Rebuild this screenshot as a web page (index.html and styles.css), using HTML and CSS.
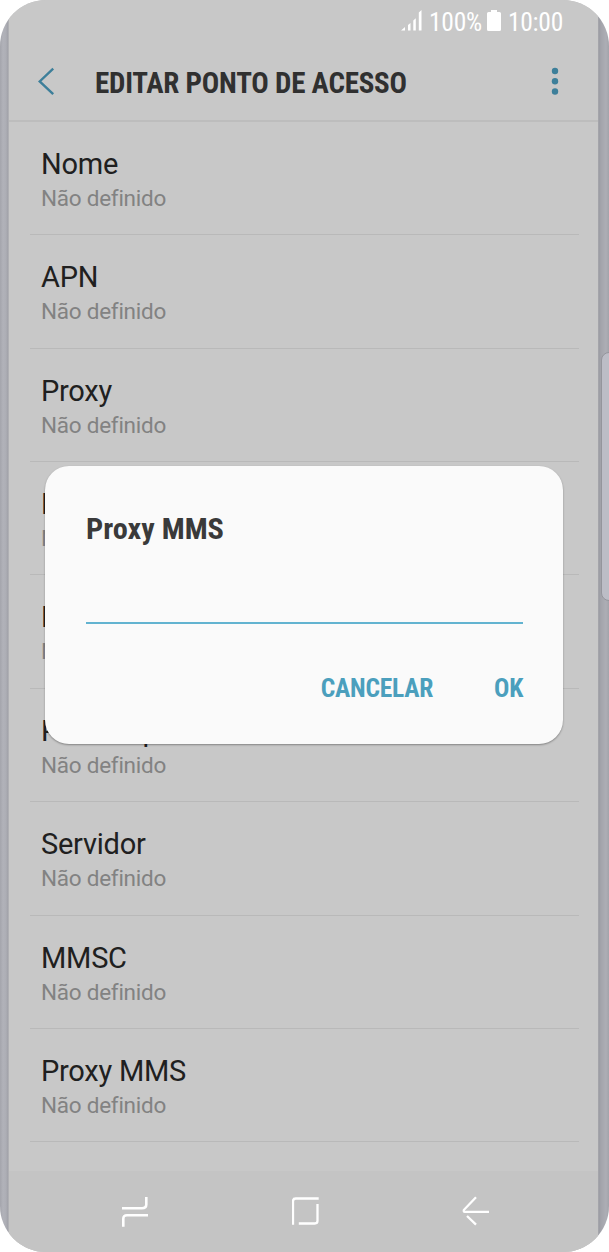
FILE: index.html
```html
<!DOCTYPE html>
<html lang="pt">
<head>
<meta charset="utf-8">
<title>Editar ponto de acesso</title>
<link rel="stylesheet" href="styles.css">
</head>
<body>
<div class="phone">
  <div class="side-panel"></div>
  <div class="screen">
    <div class="status">
      <svg class="signal" width="22" height="21" viewBox="0 0 22 21" fill="#fff"><path d="M0 20.500 4 17v3.500zM7 15l2.500-2v7.500H7zM12.300 10.500l2.500-2.200v12.200h-2.500zM17.800 2.500 20.500 0v20.500h-2.700z"/></svg>
      <span class="status-text battery-level">100%</span>
      <svg class="battery" width="14" height="21" viewBox="0 0 14 21" fill="#fff"><path d="M4 0h6v2h2.500Q14 2 14 3.500v16q0 1.500-1.500 1.500h-11Q0 21 0 19.500v-16Q0 2 1.500 2H4z"/></svg>
      <span class="status-text clock">10:00</span>
    </div>
    <header class="header">
      <svg class="back" width="18" height="28" viewBox="0 0 18 28" fill="none" stroke="#3d7f9a" stroke-width="2.400"><path d="M15.200 1.700 1.700 14.500l13.500 12.600"/></svg>
      <h1 class="title">EDITAR PONTO DE ACESSO</h1>
      <svg class="more" width="8" height="28" viewBox="0 0 8 28" fill="#3d7f9a"><circle cx="4" cy="4" r="3.200"/><circle cx="4" cy="14.200" r="3.200"/><circle cx="4" cy="24.500" r="3.200"/></svg>
    </header>
    <main class="list">
      <div class="row"><div class="name">Nome</div><div class="value">Não definido</div></div>
      <div class="row"><div class="name">APN</div><div class="value">Não definido</div></div>
      <div class="row"><div class="name">Proxy</div><div class="value">Não definido</div></div>
      <div class="row"><div class="name">Porta</div><div class="value">Não definido</div></div>
      <div class="row"><div class="name">Nome de utilizador</div><div class="value">Não definido</div></div>
      <div class="row"><div class="name">Palavra-passe</div><div class="value">Não definido</div></div>
      <div class="row"><div class="name">Servidor</div><div class="value">Não definido</div></div>
      <div class="row"><div class="name">MMSC</div><div class="value">Não definido</div></div>
      <div class="row"><div class="name">Proxy MMS</div><div class="value">Não definido</div></div>
    </main>
    <nav class="nav">
      <svg width="28" height="32" viewBox="0 0 28 32" fill="none" stroke="#fff" stroke-width="2.600"><path d="M1 13.300h20q4.300 0 4.300-3.700V2M27 20.200H6q-3.700 0-3.700 3.700v7.800"/></svg>
      <svg width="28" height="32" viewBox="0 0 28 32" fill="none" stroke="#fff" stroke-width="2.300"><path d="M1 29.700V6.200q0-2.700 2.700-2.700h23M25.500 9v16.800q0 2.700-2.700 2.700H6.800"/></svg>
      <svg width="28" height="32" viewBox="0 0 28 32" fill="none" stroke="#fff" stroke-width="2.300"><path d="M14 2.300 2 14.800q-.8 2 .8 2H27M5 21l9 8.700"/></svg>
    </nav>
  </div>
  <section class="dialog">
    <h2 class="dialog-title">Proxy MMS</h2>
    <div class="field"></div>
    <div class="actions"><span>CANCELAR</span><span>OK</span></div>
  </section>
</div>
</body>
</html>
```
FILE: styles.css
```css
* { box-sizing: border-box; }
body { margin: 0; background: #fff; font-family: Roboto, sans-serif; }
svg { display: block; flex: none; }
.phone {
  position: relative;
  width: 609px;
  height: 1252px;
  padding: 0 11px 0 9px;
  overflow: hidden;
  border-radius: 46px;
  background: linear-gradient(90deg, #a4a5ac 0, #b1b2b9 3px, #adaeb5 6px, #a0a1a8 8px, #bfbfc0 9px, #bfbfc0 597px, #9b9ca3 599px, #a3a4ab 601px, #adaeb5 606px, #a2a3aa 609px);
}
.side-panel {
  position: absolute;
  left: 601px;
  top: 352px;
  width: 20px;
  height: 249px;
  border: 1px solid #94959c;
  border-radius: 8px;
  background: #bcbdc6;
}
.screen { height: 1252px; display: flex; flex-direction: column; background: #c8c8c8; }
.status { height: 42px; padding: 10px 35px 0 0; display: flex; justify-content: flex-end; align-items: flex-start; }
.status-text { font: 400 25.5px/24px "Roboto Condensed", Roboto, sans-serif; font-stretch: 75%; letter-spacing: -.25px; color: #fff; }
.battery-level { margin: 0 5px 0 6px; }
.clock { margin-left: 7px; }
.header { height: 80px; border-bottom: 2px solid #bdbdbd; padding: 0 39px 0 29px; display: flex; align-items: center; }
.title { flex: 1; margin: 3px 0 0 39px; font: 700 29px/36px "Roboto Condensed", Roboto, sans-serif; font-stretch: 75%; letter-spacing: -.23px; color: #303030; white-space: nowrap; }
.list { height: 1049px; padding: 0 19px 0 21px; }
.row { height: 113.37px; padding: 25px 0 0 11px; border-bottom: 1.5px solid #b9b9b9; white-space: nowrap; }
.name { font-size: 29px; line-height: 34px; letter-spacing: -.25px; color: #202020; }
.value { font-size: 22.5px; line-height: 34px; letter-spacing: -.25px; color: #828282; }
.nav { flex: 1; padding: 24px 108px 0 112px; display: flex; justify-content: space-between; align-items: flex-start; background: #c4c4c4; }
.dialog {
  position: absolute;
  left: 45px;
  top: 466px;
  width: 518px;
  height: 278px;
  padding: 44px 40px 0 41px;
  border-radius: 24px;
  background: #fafafa;
  box-shadow: 0 1px 2px rgba(0, 0, 0, .35);
}
.dialog-title { margin: 0; font: 700 30.3px/38px "Roboto Condensed", Roboto, sans-serif; font-stretch: 75%; color: #3a3a3a; }
.field { height: 76px; border-bottom: 2px solid #62b3d0; }
.actions { display: flex; justify-content: flex-end; gap: 61px; margin-top: 47px; font: 700 25.5px/34px "Roboto Condensed", Roboto, sans-serif; font-stretch: 75%; letter-spacing: -.25px; color: #4b9fbd; }
```
